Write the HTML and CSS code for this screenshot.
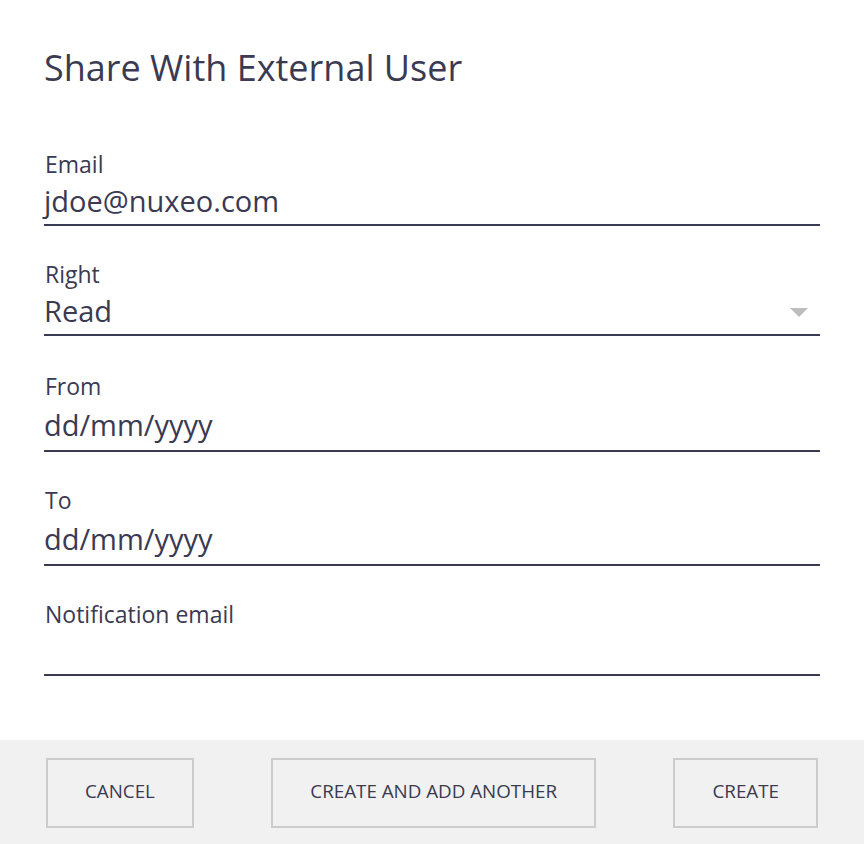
FILE: index.html
```html
<!DOCTYPE html>
<html lang="en">
<head>
  <meta charset="UTF-8">
  <title>Share With External User</title>
  <link rel="stylesheet" href="styles.css">
</head>
<body>
  <div class="dialog">
    <div class="dialog-body">
      <h2 class="title">Share With External User</h2>

      <div class="field">
        <label class="label">Email</label>
        <div class="input">jdoe@nuxeo.com</div>
      </div>

      <div class="field select-field">
        <label class="label">Right</label>
        <div class="input select">
          <span>Read</span>
          <span class="arrow"></span>
        </div>
      </div>

      <div class="field date">
        <label class="label">From</label>
        <div class="input">dd/mm/yyyy</div>
      </div>

      <div class="field date">
        <label class="label">To</label>
        <div class="input">dd/mm/yyyy</div>
      </div>

      <div class="field">
        <label class="label">Notification email</label>
        <div class="input"></div>
      </div>
    </div>

    <div class="dialog-footer">
      <button class="btn">CANCEL</button>
      <button class="btn">CREATE AND ADD ANOTHER</button>
      <button class="btn">CREATE</button>
    </div>
  </div>
</body>
</html>
```

FILE: styles.css
```css
body{
  margin:0;
  background-color:#ffffff;
  color:#3a3a52;
  font-family:"Open Sans", "Noto Sans", sans-serif;
}

.dialog{
  width:864px;
  height:844px;
  display:flex;
  flex-direction:column;
}

.dialog-body{
  flex:1;
  padding:0 44px;
}

.title{
  margin:0;
  padding-top:46px;
  font-size:36px;
  font-weight:400;
  line-height:44px;
  margin-bottom:60px;
}

.field{
  display:flex;
  flex-direction:column;
  margin-bottom:34px;
}

.select-field{
  margin-bottom:36px;
}

.label{
  font-size:23px;
  line-height:28px;
  padding-left:1px;
}

.input{
  height:38px;
  line-height:38px;
  padding-top:4px;
  padding-bottom:4px;
  font-size:29px;
  border-bottom:2px solid #3a3a52;
  display:flex;
  align-items:center;
  justify-content:space-between;
}

.field.date .input{
  padding-top:6px;
  padding-bottom:6px;
}

.arrow{
  width:0;
  height:0;
  border-left:9px solid transparent;
  border-right:9px solid transparent;
  border-top:9px solid #bdbdbd;
  margin-right:12px;
  margin-top:2px;
}

.dialog-footer{
  height:104px;
  background-color:#f1f1f1;
  display:flex;
  justify-content:space-between;
  align-items:flex-start;
  padding:18px 46px 0 46px;
  box-sizing:border-box;
}

.btn{
  height:70px;
  padding:0 37px 4px 37px;
  background-color:#f1f1f1;
  border:2px solid #cccccc;
  color:#3a3a52;
  font-family:"Open Sans", "Noto Sans", sans-serif;
  font-size:18.8px;
}
```
